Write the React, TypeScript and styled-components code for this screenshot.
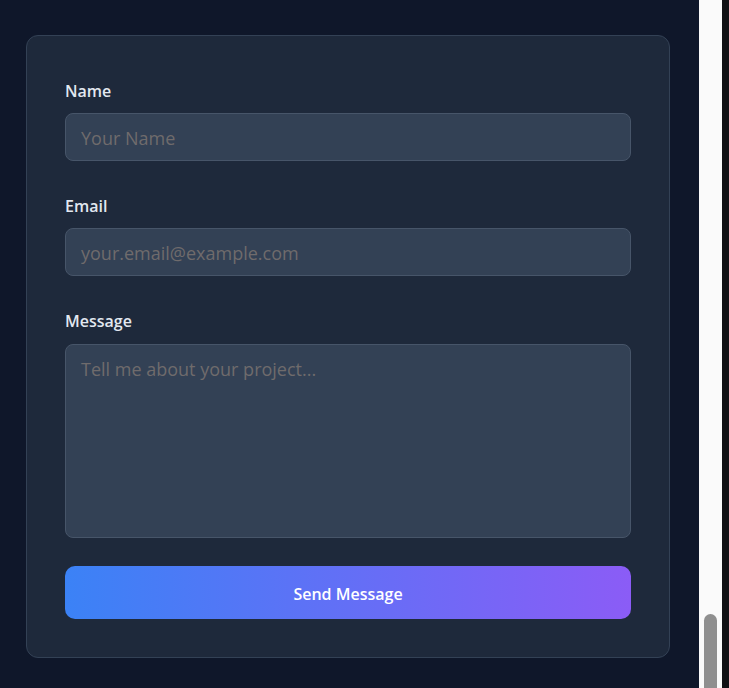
import React from "react";
import styled, { createGlobalStyle } from "styled-components";

const Global = createGlobalStyle`
  html, body { margin: 0; padding: 0; height: 100%; overflow: hidden; background: #0f172a; }
  #root { height: 100%; }
  * { box-sizing: border-box; }
`;

const Frame = styled.div`
  display: flex;
  height: 100vh;
  font-family: "Open Sans", "Noto Sans", sans-serif;
`;

const Main = styled.main`
  flex: 1;
  background: #0f172a;
  padding: 35px 0 0 26px;
  overflow: hidden;
`;

const ScrollTrack = styled.div`
  width: 23px;
  background: #fafafa;
  display: flex;
  flex-direction: column;
  justify-content: flex-end;
  align-items: center;
`;

const ScrollThumb = styled.div`
  width: 13px;
  height: 74px;
  background: #8f8f8f;
  border-radius: 7px 7px 0 0;
`;

const Edge = styled.div`
  width: 7px;
  background: #111114;
`;

const Card = styled.form`
  width: 644px;
  background: #1e293b;
  border: 1px solid #334155;
  border-radius: 12px;
  padding: 38px 38px 38px;
  display: flex;
  flex-direction: column;
`;

const Field = styled.div`
  display: flex;
  flex-direction: column;
  margin-bottom: 28px;
`;

const Label = styled.label`
  font-size: 16px;
  font-weight: 600;
  line-height: 24px;
  color: #e2e8f0;
  margin: 5px 0 10px;
`;

const fieldStyles = `
  width: 100%;
  background: #334155;
  border: 1px solid #475569;
  border-radius: 8px;
  color: #f1f5f9;
  font-family: "Open Sans", "Noto Sans", sans-serif;
  font-size: 18px;
  outline: none;
  &::placeholder { color: #6f6b6c; opacity: 1; }
`;

const Input = styled.input`
  ${fieldStyles}
  height: 48px;
  padding: 2px 15px 0;
`;

const TextArea = styled.textarea`
  ${fieldStyles}
  height: 194px;
  margin-top: 1px;
  padding: 11px 15px;
  line-height: 27px;
  resize: none;
  display: block;
`;

const Button = styled.button`
  height: 53px;
  padding: 2px 0 0;
  border: none;
  border-radius: 10px;
  background: linear-gradient(90deg, #3b82f6 0%, #8b5cf6 100%);
  color: #ffffff;
  font-family: "Open Sans", "Noto Sans", sans-serif;
  font-size: 16px;
  font-weight: 600;
  cursor: pointer;
`;

export default function App() {
  return (
    <>
      <Global />
      <Frame>
        <Main>
          <Card onSubmit={(e) => e.preventDefault()}>
            <Field>
              <Label htmlFor="name">Name</Label>
              <Input id="name" placeholder="Your Name" />
            </Field>
            <Field>
              <Label htmlFor="email">Email</Label>
              <Input id="email" placeholder="your.email@example.com" />
            </Field>
            <Field>
              <Label htmlFor="message">Message</Label>
              <TextArea id="message" placeholder="Tell me about your project..." />
            </Field>
            <Button type="submit">Send Message</Button>
          </Card>
        </Main>
        <ScrollTrack>
          <ScrollThumb />
        </ScrollTrack>
        <Edge />
      </Frame>
    </>
  );
}
